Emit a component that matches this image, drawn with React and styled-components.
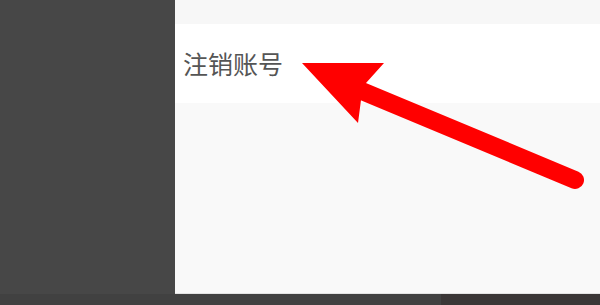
import styled, { createGlobalStyle } from "styled-components";

const Global = createGlobalStyle`
  html, body {
    margin: 0;
    padding: 0;
    background: #474747;
  }
  body {
    font-family: "Noto Sans CJK SC", "Noto Sans", sans-serif;
  }
`;

const Page = styled.div`
  position: relative;
  width: 600px;
  height: 305px;
  display: flex;
  flex-direction: column;
  background: #474747;
  overflow: hidden;
`;

const Main = styled.div`
  display: flex;
  height: 294px;
`;

const Sidebar = styled.div`
  width: 175px;
  background: #474747;
`;

const Screen = styled.div`
  flex: 1;
  display: flex;
  flex-direction: column;
  background: #f9f9f9;
  border-bottom: 1px solid #e4e4e4;
`;

const TopStrip = styled.div`
  height: 24px;
  background: #f7f7f7;
`;

const Row = styled.div`
  height: 79px;
  background: #ffffff;
  display: flex;
  align-items: center;
  padding-left: 8px;
  padding-bottom: 2px;
  box-sizing: border-box;
`;

const Label = styled.span`
  font-size: 25px;
  color: #555555;
  letter-spacing: 0;
`;

const Bottom = styled.div`
  flex: 1;
  display: flex;
`;

const BottomPart = styled.div`
  width: ${(p) => p.width}px;
  flex: ${(p) => (p.width ? "none" : 1)};
  background: ${(p) => p.color};
`;

const Arrow = styled.svg`
  position: absolute;
  left: 0;
  top: 0;
  pointer-events: none;
`;

export default function App() {
  return (
    <>
      <Global />
      <Page>
        <Main>
          <Sidebar />
          <Screen>
            <TopStrip />
            <Row>
              <Label>注销账号</Label>
            </Row>
          </Screen>
        </Main>
        <Bottom>
          <BottomPart width={441} color="#414141" />
          <BottomPart color="#3a3636" />
        </Bottom>
        <Arrow width="600" height="305" viewBox="0 0 600 305">
          <line
            x1="345"
            y1="84"
            x2="575"
            y2="180"
            stroke="#ff0000"
            strokeWidth="18"
            strokeLinecap="round"
          />
          <polygon points="302,63 384,63 366,83 361,100 358,123" fill="#ff0000" />
        </Arrow>
      </Page>
    </>
  );
}
